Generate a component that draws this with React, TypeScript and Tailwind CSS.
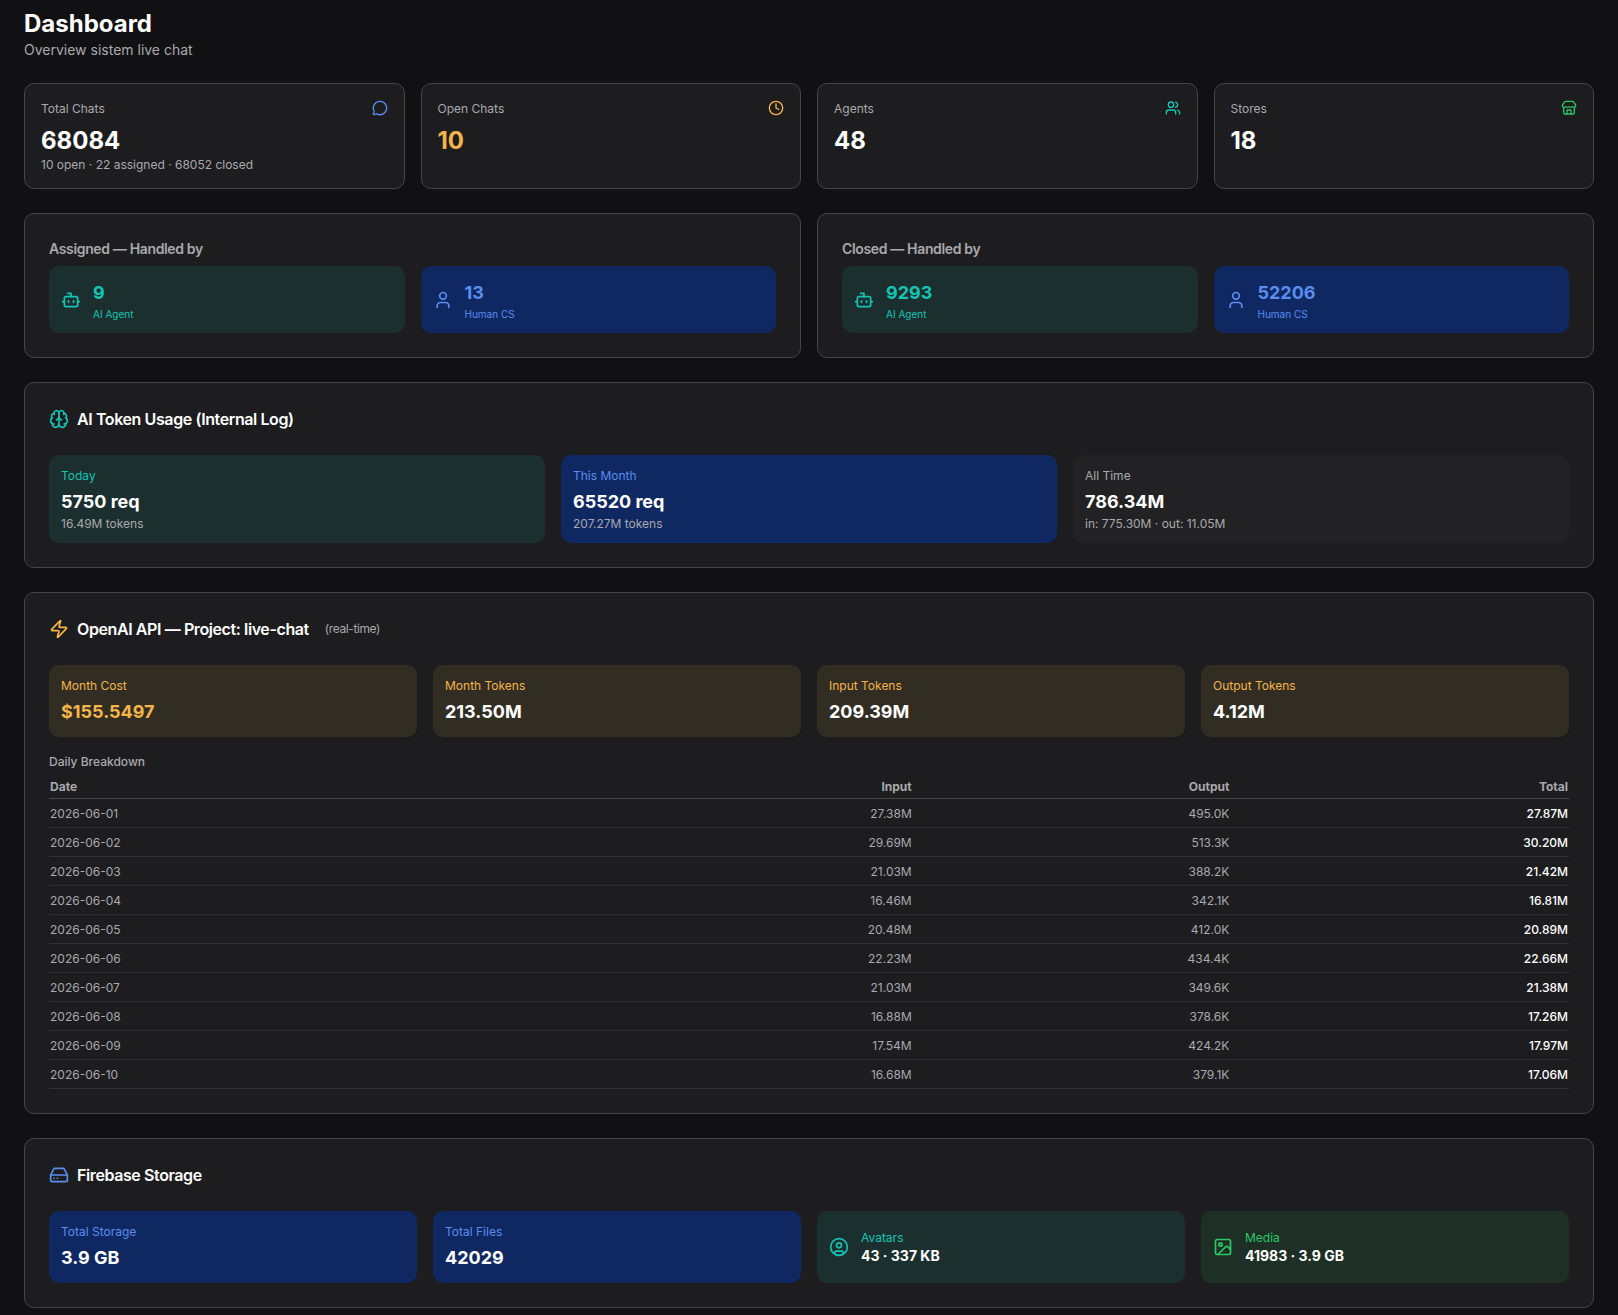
import {
  Bot, Brain, CircleUser, Clock, HardDrive, Image as ImageIcon,
  MessageCircle, Store, User, Users, Zap,
} from 'lucide-react';

const topStats = [
  { label: 'Total Chats', value: '68084', sub: '10 open · 22 assigned · 68052 closed', icon: MessageCircle, iconColor: 'text-[#5b8def]', valueColor: 'text-white' },
  { label: 'Open Chats', value: '10', sub: '', icon: Clock, iconColor: 'text-[#f5b54a]', valueColor: 'text-[#f5b54a]' },
  { label: 'Agents', value: '48', sub: '', icon: Users, iconColor: 'text-[#14c4b4]', valueColor: 'text-white' },
  { label: 'Stores', value: '18', sub: '', icon: Store, iconColor: 'text-[#2bc866]', valueColor: 'text-white' },
];

const handled = [
  { title: 'Assigned — Handled by', ai: '9', human: '13' },
  { title: 'Closed — Handled by', ai: '9293', human: '52206' },
];

const tokenUsage = [
  { label: 'Today', value: '5750 req', sub: '16.49M tokens', box: 'bg-[#1c2f2f]', labelColor: 'text-[#14c4b4]' },
  { label: 'This Month', value: '65520 req', sub: '207.27M tokens', box: 'bg-[#0f2862]', labelColor: 'text-[#5b8def]' },
  { label: 'All Time', value: '786.34M', sub: 'in: 775.30M · out: 11.05M', box: 'bg-[#222224]', labelColor: 'text-[#a9a9ae]' },
];

const openai = [
  { label: 'Month Cost', value: '$155.5497', valueColor: 'text-[#f5b54a]' },
  { label: 'Month Tokens', value: '213.50M', valueColor: 'text-white' },
  { label: 'Input Tokens', value: '209.39M', valueColor: 'text-white' },
  { label: 'Output Tokens', value: '4.12M', valueColor: 'text-white' },
];

const storage = [
  { label: 'Total Storage', value: '3.9 GB' },
  { label: 'Total Files', value: '42029' },
];

const daily = [
  ['2026-06-01', '27.38M', '495.0K', '27.87M'],
  ['2026-06-02', '29.69M', '513.3K', '30.20M'],
  ['2026-06-03', '21.03M', '388.2K', '21.42M'],
  ['2026-06-04', '16.46M', '342.1K', '16.81M'],
  ['2026-06-05', '20.48M', '412.0K', '20.89M'],
  ['2026-06-06', '22.23M', '434.4K', '22.66M'],
  ['2026-06-07', '21.03M', '349.6K', '21.38M'],
  ['2026-06-08', '16.88M', '378.6K', '17.26M'],
  ['2026-06-09', '17.54M', '424.2K', '17.97M'],
  ['2026-06-10', '16.68M', '379.1K', '17.06M'],
];

const card = 'rounded-[10px] border border-[#454548] bg-[#1d1d1f]';
const tile = 'rounded-[10px] px-3 pt-[13px] pb-[11px]';
const iconTile = 'flex items-center gap-3 rounded-[10px] px-3 py-[11px]';
const heading = 'mb-6 flex items-center gap-2 font-semibold tracking-tight';
const th = 'px-px pt-px pb-[3px]';
const td = 'px-px pt-[7px] pb-[5px]';

export default function App() {
  return (
    <main className="min-h-screen space-y-6 bg-[#111113] px-6 py-2 font-['Inter',sans-serif] text-white">
      <header>
        <h1 className="text-2xl font-bold">Dashboard</h1>
        <p className="text-sm/[19px] text-[#a9a9ae]">Overview sistem live chat</p>
      </header>

      <div className="grid grid-cols-4 gap-4">
        {topStats.map((s) => (
          <div key={s.label} className={`${card} px-4 pt-4 pb-[15px]`}>
            <div className="flex items-start justify-between">
              <span className="text-xs/[18px] text-[#a9a9ae]">{s.label}</span>
              <s.icon size={16} className={s.iconColor} />
            </div>
            <p className={`mt-[7px] text-2xl font-bold ${s.valueColor}`}>{s.value}</p>
            {s.sub && <p className="text-xs text-[#a9a9ae]">{s.sub}</p>}
          </div>
        ))}
      </div>

      <div className="grid grid-cols-2 gap-4">
        {handled.map((h) => (
          <section key={h.title} className={`${card} p-6`}>
            <h2 className="mb-1.5 text-sm/[22px] font-semibold tracking-tight text-[#a9a9ae]">{h.title}</h2>
            <div className="grid grid-cols-2 gap-4">
              <div className={`${iconTile} bg-[#1c2f2f] text-[#14c4b4]`}>
                <Bot size={20} />
                <div className="pt-0.5">
                  <p className="text-lg font-bold">{h.ai}</p>
                  <p className="text-[10px]">AI Agent</p>
                </div>
              </div>
              <div className={`${iconTile} bg-[#0f2862] text-[#5b8def]`}>
                <User size={20} />
                <div className="pt-0.5">
                  <p className="text-lg font-bold">{h.human}</p>
                  <p className="text-[10px]">Human CS</p>
                </div>
              </div>
            </div>
          </section>
        ))}
      </div>

      <section className={`${card} p-6`}>
        <h2 className={heading}>
          <Brain size={20} className="text-[#14c4b4]" />
          AI Token Usage (Internal Log)
        </h2>
        <div className="grid grid-cols-3 gap-4">
          {tokenUsage.map((t) => (
            <div key={t.label} className={`${tile} ${t.box}`}>
              <p className={`text-xs ${t.labelColor}`}>{t.label}</p>
              <p className="mt-1 text-lg font-bold">{t.value}</p>
              <p className="text-xs text-[#a9a9ae]">{t.sub}</p>
            </div>
          ))}
        </div>
      </section>

      <section className={`${card} p-6`}>
        <h2 className={heading}>
          <Zap size={20} className="text-[#f5b54a]" />
          OpenAI API — Project: live-chat
          <span className="ml-2 text-xs font-normal text-[#a9a9ae]">(real-time)</span>
        </h2>
        <div className="grid grid-cols-4 gap-4">
          {openai.map((o) => (
            <div key={o.label} className={`${tile} bg-[#322d23]`}>
              <p className="text-xs text-[#f5b54a]">{o.label}</p>
              <p className={`mt-1 text-lg font-bold ${o.valueColor}`}>{o.value}</p>
            </div>
          ))}
        </div>
        <h3 className="mt-4 mb-2 text-xs/[17px] font-medium text-[#a9a9ae]">Daily Breakdown</h3>
        <table className="w-full text-xs text-[#a9a9ae]">
          <thead>
            <tr className="border-b border-[#454548]">
              <th className={`${th} text-left`}>Date</th>
              <th className={`${th} text-right`}>Input</th>
              <th className={`${th} text-right`}>Output</th>
              <th className={`${th} text-right`}>Total</th>
            </tr>
          </thead>
          <tbody>
            {daily.map(([date, input, output, total]) => (
              <tr key={date} className="border-b border-[#313134]">
                <td className={td}>{date}</td>
                <td className={`${td} text-right`}>{input}</td>
                <td className={`${td} text-right`}>{output}</td>
                <td className={`${td} text-right font-medium text-white`}>{total}</td>
              </tr>
            ))}
          </tbody>
        </table>
      </section>

      <section className={`${card} p-6`}>
        <h2 className={heading}>
          <HardDrive size={20} className="text-[#5b8def]" />
          Firebase Storage
        </h2>
        <div className="grid grid-cols-4 gap-4">
          {storage.map((s) => (
            <div key={s.label} className={`${tile} bg-[#0f2862]`}>
              <p className="text-xs text-[#5b8def]">{s.label}</p>
              <p className="mt-1 text-lg font-bold">{s.value}</p>
            </div>
          ))}
          <div className={`${iconTile} bg-[#1c2f2f]`}>
            <CircleUser size={20} className="text-[#14c4b4]" />
            <div className="pt-0.5">
              <p className="text-xs text-[#14c4b4]">Avatars</p>
              <p className="text-sm font-bold">43 · 337 KB</p>
            </div>
          </div>
          <div className={`${iconTile} bg-[#1e2f25]`}>
            <ImageIcon size={20} className="text-[#2bc866]" />
            <div className="pt-0.5">
              <p className="text-xs text-[#2bc866]">Media</p>
              <p className="text-sm font-bold">41983 · 3.9 GB</p>
            </div>
          </div>
        </div>
      </section>
    </main>
  );
}
